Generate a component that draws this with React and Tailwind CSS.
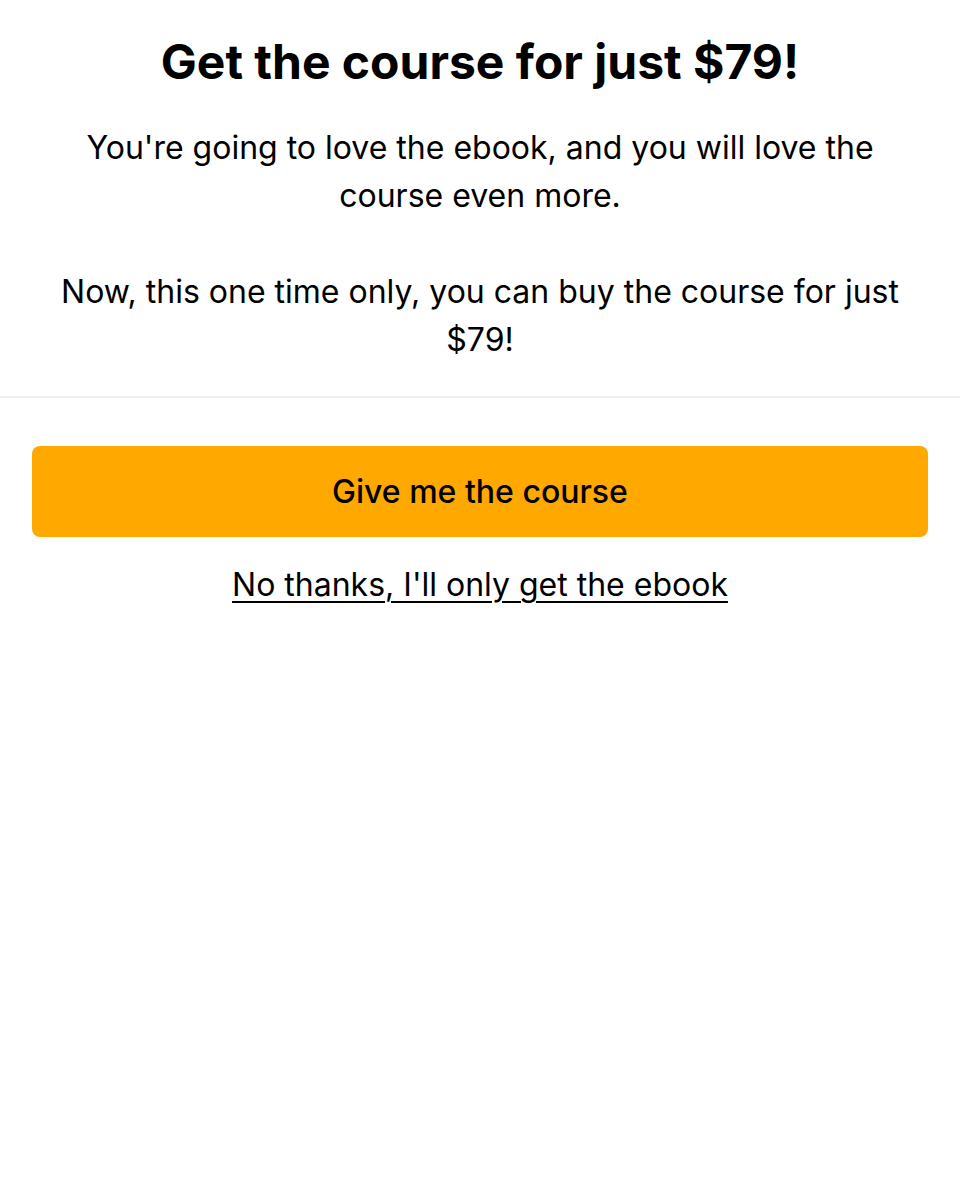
export default function App() {
  return (
    <div className="min-h-[1200px] bg-white text-black" style={{ fontFamily: "Inter, 'Noto Sans', sans-serif" }}>
      <div className="px-[32px] pt-[32px] pb-[32px] text-center">
        <h1 className="text-[48px] leading-[60px] font-bold">Get the course for just $79!</h1>
        <div className="mt-[32px] text-[32px] leading-[48px]">
          <p>You're going to love the ebook, and you will love the course even more.</p>
          <p className="mt-[48px]">Now, this one time only, you can buy the course for just $79!</p>
        </div>
      </div>
      <div className="h-[2px] bg-[#eeeeee]" />
      <div className="px-[32px] pt-[48px]">
        <button className="w-full h-[91px] rounded-[8px] bg-[#ffa800] text-[32px] font-medium text-black">
          Give me the course
        </button>
        <div className="mt-[24px] text-center">
          <a href="#" className="text-[32px] leading-[48px] underline decoration-[2px] underline-offset-[5px]">No thanks, I'll only get the ebook</a>
        </div>
      </div>
    </div>
  );
}
